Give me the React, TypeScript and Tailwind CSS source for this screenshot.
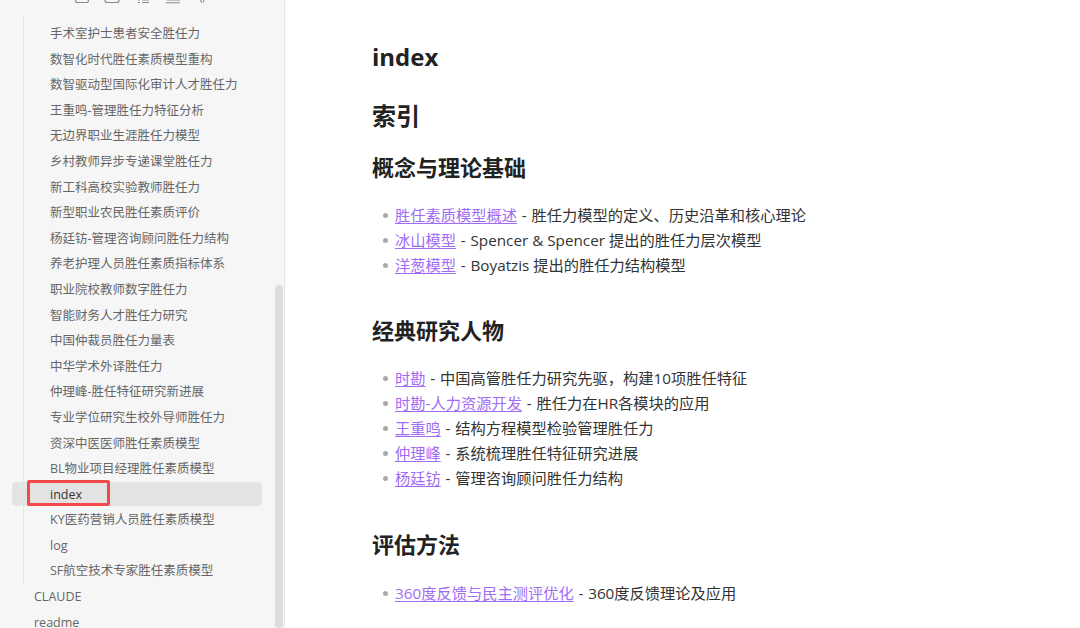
const cjk = "font-['Open_Sans','Noto_Sans_CJK_SC',sans-serif]";

const tree = [
  "手术室护士患者安全胜任力",
  "数智化时代胜任素质模型重构",
  "数智驱动型国际化审计人才胜任力",
  "王重鸣-管理胜任力特征分析",
  "无边界职业生涯胜任力模型",
  "乡村教师异步专递课堂胜任力",
  "新工科高校实验教师胜任力",
  "新型职业农民胜任素质评价",
  "杨廷钫-管理咨询顾问胜任力结构",
  "养老护理人员胜任素质指标体系",
  "职业院校教师数字胜任力",
  "智能财务人才胜任力研究",
  "中国仲裁员胜任力量表",
  "中华学术外译胜任力",
  "仲理峰-胜任特征研究新进展",
  "专业学位研究生校外导师胜任力",
  "资深中医医师胜任素质模型",
  "BL物业项目经理胜任素质模型",
];

const treeAfter = ["KY医药营销人员胜任素质模型", "log", "SF航空技术专家胜任素质模型"];

const sections = [
  {
    title: "经典研究人物",
    headCls: "mt-[33px]",
    listCls: "mt-[18px]",
    items: [
      ["时勘", "中国高管胜任力研究先驱，构建10项胜任特征"],
      ["时勘-人力资源开发", "胜任力在HR各模块的应用"],
      ["王重鸣", "结构方程模型检验管理胜任力"],
      ["仲理峰", "系统梳理胜任特征研究进展"],
      ["杨廷钫", "管理咨询顾问胜任力结构"],
    ],
  },
  {
    title: "评估方法",
    headCls: "mt-[34px]",
    listCls: "mt-[19px]",
    items: [["360度反馈与民主测评优化", "360度反馈理论及应用"]],
  },
];

function Row({ link, text }: { link: string; text: string }) {
  return (
    <li className="flex h-[25.2px] items-center text-[15.25px] leading-[25px] text-[#333333]">
      <span className="ml-[11px] mr-[7px] h-[5px] w-[5px] shrink-0 rounded-full bg-[#a9a9a9]" />
      <a className="text-[#a06cf5] underline underline-offset-2">{link}</a>
      <span className="w-[14.5px] shrink-0 text-center">-</span>
      <span className="whitespace-pre">{text}</span>
    </li>
  );
}

function TreeItem({ label }: { label: string }) {
  return <div className="h-[25.6px] truncate pl-[26px] text-[12.5px] leading-[25.6px] text-[#666666]">{label}</div>;
}

export default function App() {
  return (
    <div className={`flex h-[628px] w-[1080px] overflow-hidden bg-white ${cjk}`}>
      <aside className="relative h-full w-[285px] shrink-0 overflow-hidden border-r border-[#e4e4e4] bg-[#f6f6f6]">
        {/* toolbar, cut off at the top */}
        <svg className="block h-[4px] w-[285px]" viewBox="0 0 285 4" fill="none" stroke="#8a8a8a" strokeWidth="1.1">
          <path d="M75.5 -3v3.5a2 2 0 0 0 2 2h9a2 2 0 0 0 2-2v-3.5" />
          <path d="M105 -3v3.5a2 2 0 0 0 2 2h10a2 2 0 0 0 2-2v-3.5" />
          <path d="M138 0h2M142 0h7M138 2.5h2M142 2.5h7" />
          <path d="M167 0h13M166 2.8h14" />
          <path d="M200 -1l1.6 3.4M204.5 -1l-1.6 3.4" />
        </svg>

        <div className="ml-[23px] mt-[13px] w-[240px] border-l border-[#e5e5e5] pt-[4px]">
          {tree.map((t) => (
            <TreeItem key={t} label={t} />
          ))}
          <div className="relative">
            <TreeItem label="index" />
          </div>
          {treeAfter.map((t) => (
            <TreeItem key={t} label={t} />
          ))}
        </div>

        <div className="pl-[34px] text-[12.5px] leading-[25.6px] text-[#666666]">
          <div className="h-[25.6px]">CLAUDE</div>
          <div className="h-[25.6px]">readme</div>
        </div>

        {/* selected row and annotation box */}
        <div className="absolute left-[12px] top-[482px] h-[24px] w-[250px] rounded-[4px] bg-[#e3e3e3]" />
        <div className="absolute left-[27px] top-[480px] h-[26px] w-[83px] rounded-[2px] border-[3px] border-[#f4484d]" />
        <div className="absolute left-[50px] top-[482px] text-[12.5px] leading-[25px] text-[#333333]">index</div>

        {/* scrollbar */}
        <div className="absolute right-[1px] top-[285px] h-[343px] w-[8px] rounded-[4px] bg-[#dddddd]" />
      </aside>

      <main className="min-w-0 flex-1 pl-[87px] text-[#333333]">
        <h1 className="mt-[39px] h-[36px] text-[24px] font-bold leading-[36px] text-[#222222]">index</h1>
        <h2 className="mt-[23px] h-[36px] text-[24px] font-bold leading-[36px] text-[#222222]">索引</h2>
        <h3 className="mt-[15px] h-[36px] text-[22px] font-bold leading-[36px] text-[#222222]">概念与理论基础</h3>

        <ul className="mt-[18px]">
          <Row link="胜任素质模型概述" text="胜任力模型的定义、历史沿革和核心理论" />
          <Row link="冰山模型" text="Spencer & Spencer 提出的胜任力层次模型" />
          <Row link="洋葱模型" text="Boyatzis 提出的胜任力结构模型" />
        </ul>

        {sections.map((s) => (
          <section key={s.title}>
            <h3 className={`${s.headCls} h-[36px] text-[22px] font-bold leading-[36px] text-[#222222]`}>{s.title}</h3>
            <ul className={s.listCls}>
              {s.items.map(([link, text]) => (
                <Row key={link} link={link} text={text} />
              ))}
            </ul>
          </section>
        ))}
      </main>
    </div>
  );
}
